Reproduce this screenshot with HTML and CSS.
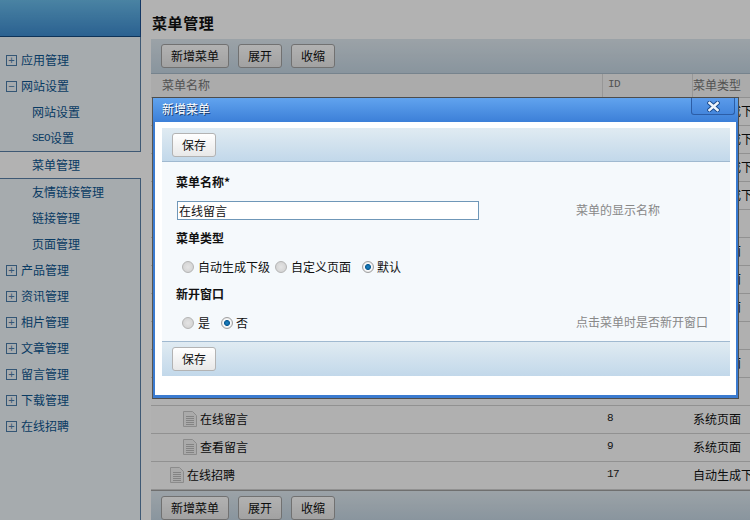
FILE: index.html
```html
<!DOCTYPE html>
<html lang="zh-CN">
<head>
<meta charset="utf-8">
<title>菜单管理</title>
<link rel="stylesheet" href="styles.css">
</head>
<body>
<div class="page">
  <aside class="side">
    <div class="side-top"></div>
    <ul class="nav nav-first">
      <li class="nav-group"><span class="tog">+</span>应用管理</li>
      <li class="nav-group"><span class="tog">−</span>网站设置</li>
      <li class="nav-sub">网站设置</li>
      <li class="nav-sub"><span class="lat">SEO</span>设置</li>
    </ul>
    <div class="nav-active">菜单管理</div>
    <ul class="nav nav-rest">
      <li class="nav-sub">友情链接管理</li>
      <li class="nav-sub">链接管理</li>
      <li class="nav-sub">页面管理</li>
      <li class="nav-group"><span class="tog">+</span>产品管理</li>
      <li class="nav-group"><span class="tog">+</span>资讯管理</li>
      <li class="nav-group"><span class="tog">+</span>相片管理</li>
      <li class="nav-group"><span class="tog">+</span>文章管理</li>
      <li class="nav-group"><span class="tog">+</span>留言管理</li>
      <li class="nav-group"><span class="tog">+</span>下载管理</li>
      <li class="nav-group"><span class="tog">+</span>在线招聘</li>
    </ul>
  </aside>
  <main class="main">
    <h1 class="title">菜单管理</h1>
    <div class="toolbar">
      <button class="btn">新增菜单</button><button class="btn">展开</button><button class="btn">收缩</button>
    </div>
    <div class="row head"><div class="c1">菜单名称</div><div class="c2 lat">ID</div><div class="c3">菜单类型</div></div>
    <div class="row"><div class="c1"></div><div class="c2"></div><div class="c3">自动生成下级</div></div>
    <div class="row"><div class="c1"></div><div class="c2"></div><div class="c3">自动生成下级</div></div>
    <div class="row"><div class="c1"></div><div class="c2"></div><div class="c3">自动生成下级</div></div>
    <div class="row"><div class="c1"></div><div class="c2"></div><div class="c3">自动生成下级</div></div>
    <div class="row"><div class="c1"></div><div class="c2"></div><div class="c3"></div></div>
    <div class="row"><div class="c1"></div><div class="c2"></div><div class="c3">系统页面</div></div>
    <div class="row"><div class="c1"></div><div class="c2"></div><div class="c3">系统页面</div></div>
    <div class="row"><div class="c1"></div><div class="c2"></div><div class="c3">系统页面</div></div>
    <div class="row"><div class="c1"></div><div class="c2"></div><div class="c3"></div></div>
    <div class="row"><div class="c1"></div><div class="c2"></div><div class="c3">系统页面</div></div>
    <div class="row"><div class="c1"></div><div class="c2"></div><div class="c3"></div></div>
    <div class="row"><div class="c1 lv2"><svg class="doc" viewBox="0 0 14 16"><path class="doc-page" d="M.5.5h9l4 4v11h-13z"/><path class="doc-lines" d="M3 5.500h8M3 7.500h8M3 9.500h8M3 11.500h8M3 13.500h8"/></svg>在线留言</div><div class="c2 num">8</div><div class="c3">系统页面</div></div>
    <div class="row"><div class="c1 lv2"><svg class="doc" viewBox="0 0 14 16"><path class="doc-page" d="M.5.5h9l4 4v11h-13z"/><path class="doc-lines" d="M3 5.500h8M3 7.500h8M3 9.500h8M3 11.500h8M3 13.500h8"/></svg>查看留言</div><div class="c2 num">9</div><div class="c3">系统页面</div></div>
    <div class="row"><div class="c1 lv1"><svg class="doc" viewBox="0 0 14 16"><path class="doc-page" d="M.5.5h9l4 4v11h-13z"/><path class="doc-lines" d="M3 5.500h8M3 7.500h8M3 9.500h8M3 11.500h8M3 13.500h8"/></svg>在线招聘</div><div class="c2 num">17</div><div class="c3">自动生成下级</div></div>
    <div class="toolbar toolbar-bottom">
      <button class="btn">新增菜单</button><button class="btn">展开</button><button class="btn">收缩</button>
    </div>
  </main>
</div>
<div class="overlay"></div>
<section class="modal">
  <header class="modal-bar">
    <span class="modal-title">新增菜单</span>
    <span class="modal-close"><svg class="x-icon" viewBox="0 0 13 11"><path d="M2.500 2l8 7M10.500 2l-8 7" stroke="#1a4a8c" stroke-width="4.400" stroke-linecap="square"/><path d="M2.500 2l8 7M10.500 2l-8 7" stroke="#eef4fb" stroke-width="2.600" stroke-linecap="square"/></svg></span>
  </header>
  <div class="modal-inner">
    <div class="form-bar"><button class="btn btn-light">保存</button></div>
    <div class="form">
      <div class="form-label">菜单名称*</div>
      <div class="form-field">
        <input class="input" type="text" value="在线留言">
        <span class="hint">菜单的显示名称</span>
      </div>
      <div class="form-label">菜单类型</div>
      <div class="form-field radios">
        <label class="opt"><span class="radio"></span>自动生成下级</label>
        <label class="opt"><span class="radio"></span>自定义页面</label>
        <label class="opt opt-gap"><span class="radio on"></span>默认</label>
      </div>
      <div class="form-label">新开窗口</div>
      <div class="form-field radios">
        <label class="opt"><span class="radio"></span>是</label>
        <label class="opt opt-gap"><span class="radio on"></span>否</label>
        <span class="hint hint-end">点击菜单时是否新开窗口</span>
      </div>
    </div>
    <div class="form-bar form-bar-bottom"><button class="btn btn-light">保存</button></div>
  </div>
</section>
</body>
</html>
```
FILE: styles.css
```css
* { box-sizing: border-box; }
html, body { margin: 0; height: 100%; overflow: hidden; }
body {
  width: 750px; height: 520px; position: relative; background: #fff;
  font: 12px/1 "Noto Sans CJK SC", "Liberation Sans", sans-serif; color: #111;
}
ul { list-style: none; margin: 0; padding: 0; }
.lat { font-family: "Liberation Mono", "Noto Sans CJK SC", monospace; font-size: 11px; letter-spacing: -.6px; }
.page { display: flex; width: 750px; height: 520px; overflow: hidden; }

.side { width: 141px; flex: none; display: flex; flex-direction: column; }
.side-top {
  height: 37px; flex: none; border-right: 1px solid #1c4f90; border-bottom: 1px solid #134a80;
  background: linear-gradient(#6abcea, #3e8cd0);
}
.nav { background: #eef5fa; border-right: 1px solid #5b80a6; color: #0d558f; }
.nav-first { padding-top: 10px; height: 115px; border-bottom: 1px solid #5b80a6; }
.nav-rest { flex: 1; border-top: 1px solid #5b80a6; }
.nav li { height: 26px; display: flex; align-items: center; font-size: 12px; }
.nav-group { padding-left: 6px; }
.nav-sub { padding-left: 32px; }
.nav-active { height: 26px; flex: none; padding-left: 32px; display: flex; align-items: center; color: #0d558f; margin-right: -1px; position: relative; }
.tog {
  width: 11px; height: 11px; border: 1px solid #4b7ca8; margin-right: 4px; color: #4b7ca8;
  display: flex; align-items: center; justify-content: center; font: 11px/1 "Liberation Sans", sans-serif;
}

.main { flex: 1; padding-left: 10px; min-width: 0; }
.title { margin: 0; height: 39px; padding: 14px 0 0 1px; font-size: 15px; line-height: 18px; font-weight: 700; letter-spacing: .6px; color: #111; }
.toolbar {
  height: 35px; padding: 5px 0 0 10px; display: flex; gap: 9px; align-items: flex-start;
  background: linear-gradient(#dfe9f0, #c4d5e2); border-bottom: 1px solid #a9bccb;
}
.toolbar-bottom { border-top: 1px solid #a0a0a0; border-bottom: 0; height: 31px; padding-top: 5px; }
.btn {
  height: 24px; padding: 0 9px; border: 1px solid #a3a3a3; border-radius: 3px; background: linear-gradient(#fff, #e8e8e8);
  font: 12px/1 "Noto Sans CJK SC", sans-serif; color: #111;
}
.btn-light { border-color: #b3b3b3; }

.row { display: flex; height: 28px; border-bottom: 1px solid #d0d0d0; background: #fcfcfc; width: 700px; }
.head { height: 24px; color: #777; background: #f5f5f5; border-bottom-color: #cfcfcf; }
.head .c1, .head .c2 { border-right: 1px solid #d8d8d8; }
.c1, .c2, .c3 { padding-bottom: 2px; }
.c1 { width: 452px; flex: none; padding-left: 11px; display: flex; align-items: center; }
.c2 { width: 90px; flex: none; padding-left: 5px; display: flex; align-items: center; }
.c3 { width: 158px; flex: none; padding-left: 0; display: flex; align-items: center; white-space: nowrap; }
.lv1 { padding-left: 19px; }
.lv2 { padding-left: 32px; }
.doc { width: 14px; height: 16px; margin-right: 3px; flex: none; }
.doc-page { fill: #f4f4f4; stroke: #c8c8c8; }
.doc-lines { fill: none; stroke: #bcbcbc; }
.num { font-family: "Liberation Mono", monospace; font-size: 11px; letter-spacing: -.6px; color: #222; padding-left: 4px; }

.overlay { position: absolute; inset: 0; background: rgba(0,0,0,.3); }
.modal {
  position: absolute; left: 152px; top: 97px; width: 587px; height: 302px; border: 1px solid #4d4d4d;
  border-left-color: #555; background: #3b7bd0; padding: 0 2px 3px 2px; display: flex; flex-direction: column;
}
.modal-bar {
  height: 24px; margin: 0 -2px; padding: 0 4px 3px 9px; position: relative; flex: none; display: flex; align-items: center;
  background: linear-gradient(#61a3ee, #3c7fd8);
}
.modal-title { color: #fff; font-size: 12px; text-shadow: 1px 1px 0 #16386a; }
.modal-close {
  position: absolute; right: 3px; top: 0; width: 44px; height: 17px; border: 1px solid #2c5da6; border-top: 0; border-radius: 0 0 3px 3px;
  background: linear-gradient(#5b9bea, #4486dc); display: flex; align-items: center; justify-content: center;
}
.x-icon { width: 13px; height: 11px; display: block; }
.modal-inner { flex: 1; background: #fff; padding: 6px 6px 0 7px; }
.form-bar {
  height: 34px; padding: 5px 10px 0; background: linear-gradient(#e0ebf2, #c2d8ea); border-bottom: 1px solid #a0b9d0;
}
.form-bar-bottom { border-top: 1px solid #a0b9d0; border-bottom: 0; height: 35px; }
.form { background: #f5f9fc; height: 179px; padding: 11px 14px 0; }
.form-label { font-weight: 700; font-size: 12px; height: 18px; line-height: 18px; color: #111; }
.form-field { position: relative; display: flex; align-items: center; height: 38px; }
.input { width: 302px; height: 19px; margin: 0 0 0 1px; padding: 0 1px; border: 1px solid #6f97b8; background: #fff; font: 12px/1 "Noto Sans CJK SC", sans-serif; color: #111; }
.hint { position: absolute; left: 400px; top: 13px; color: #888; font-size: 12px; }
.radios { padding-left: 6px; padding-top: 1px; }
.opt { display: flex; align-items: center; gap: 4px; margin-right: 5px; }
.opt-gap { margin-left: 6px; gap: 3px; }
.radio {
  width: 12px; height: 12px; border-radius: 50%; border: 1px solid #b4b4b4;
  background: radial-gradient(circle, #e4e4e4, #cfcfcf);
}
.radio.on { background: radial-gradient(circle, #1c86c8 0, #0c5c94 38%, #fdfdfd 46%, #e8e8e8 70%, #c4c4c4 100%); border-color: #a0a0a0; }
```
